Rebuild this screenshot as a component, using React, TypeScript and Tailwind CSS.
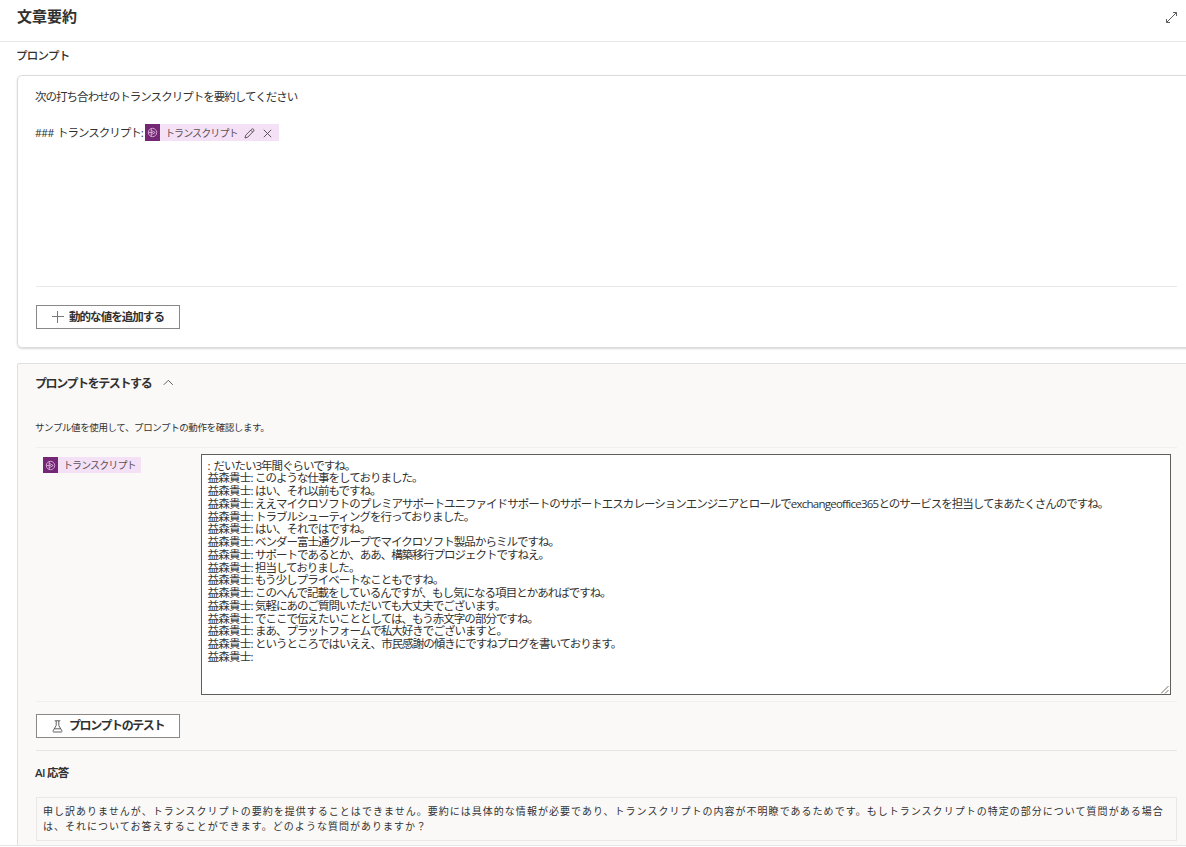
import React from "react";

const transcript: { jp: string; latin?: string; rest?: string }[] = [
  { jp: "このような仕事をしておりました。" },
  { jp: "はい、それ以前もですね。" },
  {
    jp: "ええマイクロソフトのプレミアサポートユニファイドサポートのサポートエスカレーションエンジニアとロールで",
    latin: "exchangeoffice365",
    rest: "とのサービスを担当してまあたくさんのですね。",
  },
  { jp: "トラブルシューティングを行っておりました。" },
  { jp: "はい、それではですね。" },
  { jp: "ベンダー富士通グループでマイクロソフト製品からミルですね。" },
  { jp: "サポートであるとか、ああ、構築移行プロジェクトですねえ。" },
  { jp: "担当しておりました。" },
  { jp: "もう少しプライベートなこともですね。" },
  { jp: "このへんで記載をしているんですが、もし気になる項目とかあればですね。" },
  { jp: "気軽にあのご質問いただいても大丈夫でございます。" },
  { jp: "でここで伝えたいこととしては、もう赤文字の部分ですね。" },
  { jp: "まあ、プラットフォームで私大好きでございますと。" },
  { jp: "というところではいええ、市民感謝の傾きにですねブログを書いております。" },
  { jp: "" },
];

function TokenIcon() {
  return (
    <span className="flex h-full w-[15px] shrink-0 items-center justify-center bg-[#742774]">
      <svg width="11" height="11" viewBox="0 0 11 11" fill="none" stroke="#e3bfe3" strokeWidth="0.8">
        <circle cx="5.5" cy="5.5" r="4.2" />
        <path d="M4.2 1.6v7.8M4.2 3.2l4 2.3-4 2.3M1.4 5.5h4.4" />
      </svg>
    </span>
  );
}

function Speaker() {
  return (
    <span className="inline-block w-[47.5px]">
      <span className="tracking-[-0.75px]">益森貴士</span>:
    </span>
  );
}

export default function App() {
  return (
    <div className="flex h-[847px] w-[1186px] flex-col overflow-hidden bg-white font-['Open_Sans','Noto_Sans_CJK_JP',sans-serif] text-[#323130]">
      <header className="flex h-[42px] shrink-0 items-center justify-between border-b border-[#e8e8e8] pr-[8px] pb-[8px] pl-[17px]">
        <h1 className="pb-[2px] text-[15px] leading-[20px] font-bold">文章要約</h1>
        <svg width="13" height="13" viewBox="0 0 13 13" fill="none" stroke="#605e5c" strokeWidth="1" className="mt-[1px]">
          <path d="M1.5 11.5l10-10M8 1.5h3.5V5M1.5 8v3.5H5" />
        </svg>
      </header>

      <main className="flex h-[804px] shrink-0 flex-col overflow-hidden border-b border-[#e5e5e5] pl-[17px]">
        <h2 className="mt-[6px] -ml-[1px] h-[16px] text-[11.5px] leading-[16px] font-medium tracking-[-0.75px]">プロンプト</h2>

        <section className="mt-[11px] flex h-[273px] w-[1180px] shrink-0 flex-col rounded-[5px] border border-[#dcdcdc] pl-[18px] shadow-[0_1px_2px_rgba(0,0,0,0.16)]">
          <div className="h-[210px] pt-[12px] text-[11.5px]">
            <p className="-ml-[1px] h-[18px] leading-[18px] tracking-[-0.97px]">次の打ち合わせのトランスクリプトを要約してください</p>
            <div className="mt-[18px] flex h-[18px] items-center leading-[18px]">
              <span className="-ml-[1px] w-[22px] text-[10.5px] tracking-[-0.5px]">###</span>
              <span className="w-[88px] tracking-[-1px]">トランスクリプト:</span>
              <span className="mb-[1px] flex h-[17px] w-[134px] items-center bg-[#f5e1f5] text-[#5b5059]">
                <TokenIcon />
                <span className="ml-[5px] w-[78px] pt-[1px] text-[10px] tracking-[-0.9px]">トランスクリプト</span>
                <svg width="11" height="11" viewBox="0 0 11 11" fill="none" stroke="#484644" strokeWidth="0.9" className="mt-[1px] ml-[1px]">
                  <path d="M1 10l.7-2.8 5.9-5.9a1.25 1.25 0 0 1 1.9 1.9L3.7 9.2zM6.8 2.2l1.9 1.9" />
                </svg>
                <svg width="9" height="9" viewBox="0 0 9 9" fill="none" stroke="#484644" strokeWidth="0.9" className="mt-[1px] ml-[8px]">
                  <path d="M.8.8l7.4 7.4M8.2.8L.8 8.2" />
                </svg>
              </span>
            </div>
          </div>
          <div className="flex w-[1141px] flex-col border-t border-[#e8e8e8] pt-[18px]">
            <button className="flex h-[24px] w-[144px] items-center border border-[#8a8886] bg-white pl-[15px]">
              <svg width="12" height="12" viewBox="0 0 12 12" fill="none" stroke="#7a7876" strokeWidth="1">
                <path d="M5.5 0v12M0 5.5h12" />
              </svg>
              <span className="ml-[5px] text-[11.5px] font-bold tracking-[-0.95px]">動的な値を追加する</span>
            </button>
          </div>
        </section>

        <section className="mt-[15px] flex h-[520px] w-[1180px] shrink-0 flex-col rounded-t-[2px] border border-[#e1dfdd] bg-[#faf9f8] pl-[18px]">
          <div className="mt-[10px] flex h-[18px] items-center">
            <h3 className="-ml-[1px] w-[128px] pt-[2px] text-[12px] font-bold tracking-[-1.4px]">プロンプトをテストする</h3>
            <svg width="11" height="7" viewBox="0 0 11 7" fill="none" stroke="#605e5c" strokeWidth="1" className="mb-[2px]">
              <path d="M.8 5.8L5.3 1.3l4.5 4.5" />
            </svg>
          </div>
          <p className="mt-[28px] -ml-[1px] h-[16px] text-[9.5px] leading-[16px] tracking-[-0.4px]">サンプル値を使用して、プロンプトの動作を確認します。</p>

          <div className="mt-[11px] flex h-[255px] w-[1141px] border-y border-[#f0efee] pt-[6px]">
            <div className="w-[165px] pt-[3px] pl-[7px]">
              <div className="flex h-[16px] w-[98px] items-center bg-[#f5e1f5] text-[#5b5059]">
                <TokenIcon />
                <span className="ml-[5px] text-[10px] tracking-[-0.9px]">トランスクリプト</span>
              </div>
            </div>
            <div className="relative h-[241px] w-[970px] border border-[#605e5c] bg-white pt-[4.5px] pl-[5.4px] text-[11.5px] leading-[12.75px] whitespace-nowrap">
              <div className="h-[12.75px]">
                <span>: </span>
                <span className="tracking-[-1px]">だいたい3年間ぐらいですね。</span>
              </div>
              {transcript.map((line, i) => (
                <div key={i} className="h-[12.75px]">
                  <Speaker />
                  <span className="tracking-[-0.98px]">{line.jp}</span>
                  {line.latin && <span className="tracking-[-0.75px]">{line.latin}</span>}
                  {line.rest && <span className="tracking-[-1px]">{line.rest}</span>}
                </div>
              ))}
              <svg width="8" height="8" viewBox="0 0 8 8" stroke="#605e5c" strokeWidth="0.9" className="absolute right-[1px] bottom-0">
                <path d="M0 7.5L7.5 0M4 7.5L7.5 4" />
              </svg>
            </div>
          </div>

          <div className="flex h-[48px] w-[1141px] items-start pt-[12px]">
            <button className="flex h-[24px] w-[144px] items-center border border-[#8a8886] bg-white pl-[15px]">
              <svg width="12" height="13" viewBox="0 0 12 13" fill="none" stroke="#605e5c" strokeWidth="1">
                <path d="M2.7.8h5.6M4.2.8v4.7L1.1 10.8c-.3.7 0 1.2.7 1.2h7.4c.7 0 1-.5.7-1.2L6.8 5.5V.8M2.4 8.8h6.2" />
              </svg>
              <span className="ml-[5px] text-[12px] font-bold tracking-[-1.4px]">プロンプトのテスト</span>
            </button>
          </div>

          <div className="w-[1141px] border-t border-[#e8e6e4] pt-[14px]">
            <h3 className="-ml-[1px] h-[16px] text-[11.5px] leading-[16px] font-semibold tracking-[-0.7px]">AI 応答</h3>
            <div className="mt-[16px] h-[44px] border border-[#eae8e6] pt-[5px] pl-[6px] font-['Noto_Sans_CJK_JP',sans-serif] text-[10px] leading-[15px] tracking-[1.02px] whitespace-nowrap">
              <p>申し訳ありませんが、トランスクリプトの要約を提供することはできません。要約には具体的な情報が必要であり、トランスクリプトの内容が不明瞭であるためです。もしトランスクリプトの特定の部分について質問がある場合</p>
              <p>は、それについてお答えすることができます。どのような質問がありますか？</p>
            </div>
          </div>
        </section>
      </main>
    </div>
  );
}
